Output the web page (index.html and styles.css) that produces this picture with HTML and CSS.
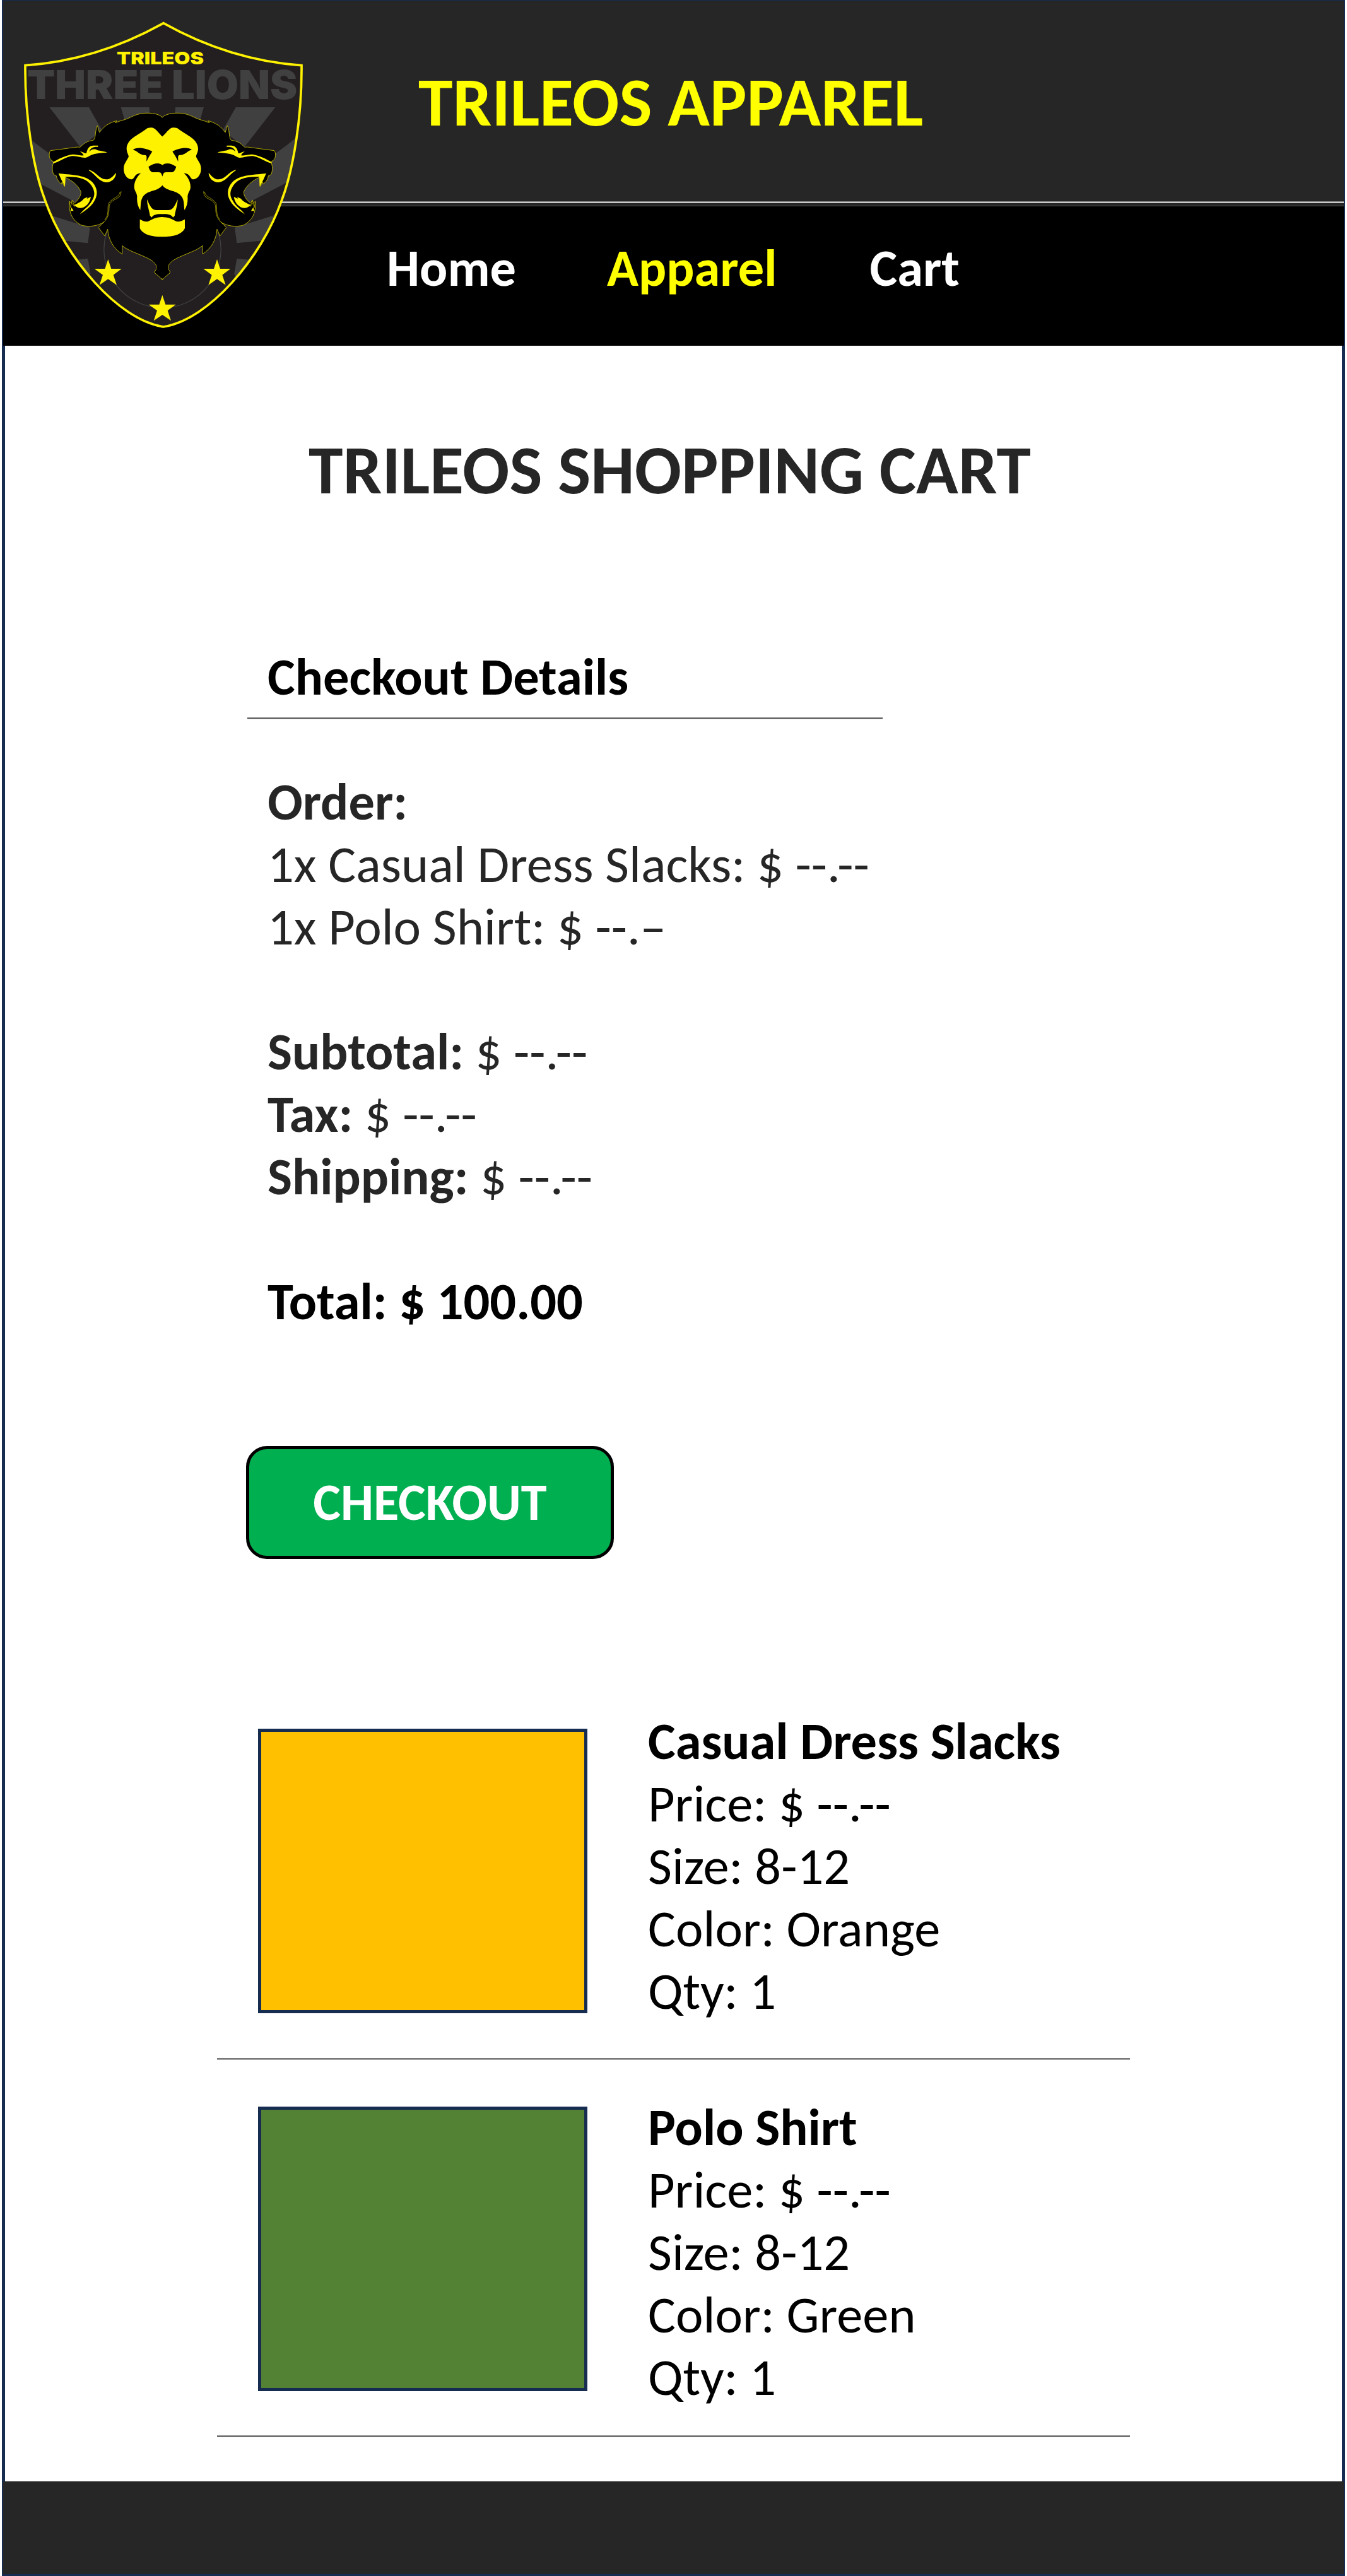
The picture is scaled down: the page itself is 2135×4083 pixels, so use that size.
FILE: index.html
```html
<!DOCTYPE html>
<html lang="en">
<head>
<meta charset="utf-8">
<title>Trileos Apparel</title>
<link rel="stylesheet" href="styles.css">
</head>
<body>
<div class="page">
  <header class="header">
    <svg class="logo" viewBox="0 0 1560 1680" role="img" aria-label="Trileos Three Lions">
      <defs>
        <clipPath id="shield-clip"><path d="M777,110 Q1093,287 1434,311 C1436,560 1394,810 1339,954 C1244,1225 994,1520 777,1554 C560,1520 310,1225 215,954 C160,810 118,560 120,311 Q461,287 777,110Z"/></clipPath>
        <g id="rays">
          <path d="M55,60H243L305,170L202,250Z"/>
          <path d="M395,60H530L534,130H415Z"/>
          <path d="M-50,200L0,240L60,284L300,420L180,512L20,428L-40,400Z"/>
          <path d="M60,574L248,632L238,706L110,694Z"/>
          <path d="M150,788L238,780L250,850L240,880Z"/>
        </g>
        <path id="mane" d="M593,108C572,90 542,87 510,88C482,89 460,98 440,108C415,121 394,122 368,134L376,124C340,132 312,152 293,180L283,147C270,178 277,206 264,217C235,220 218,232 200,251C190,246 175,252 60,266C52,276 51,300 64,312L76,321C68,335 66,360 75,380L88,386C90,402 98,414 112,425L115,415L127,437L130,393C165,410 190,430 205,462C206,482 190,502 175,516L163,502L160,515L150,508C145,560 165,600 205,620C240,632 290,625 316,604L288,632L318,672L332,640C335,690 362,735 401,758V718C430,745 500,762 540,788C572,812 562,820 562,832L556,840V848L575,864L593,881Z"/>
        <g id="side-lion">
          <path d="M72,322C110,297 145,286 168,284C190,286 200,290 218,289C215,281 207,275 200,269C215,272 224,281 231,279C235,255 245,244 262,242H286V248C262,247 248,254 245,272C250,262 262,257 275,260C290,269 310,266 330,275C300,277 275,278 252,288C242,293 235,300 222,300C203,300 185,291 165,292C140,293 110,315 74,327Z"/>
          <path d="M243,357C278,368 292,401 324,403C345,404 360,385 372,371C372,395 352,417 326,417C290,415 275,380 243,361Z"/>
          <path d="M98,374C150,382 222,378 258,415C286,445 286,478 268,507C252,536 222,552 200,569C214,549 245,530 257,505C274,480 271,457 255,433C232,398 190,388 131,391L129,437L112,405Z"/>
          <path d="M172,525C190,516 208,510 218,495L236,487L233,495L252,486C248,510 235,530 212,538C197,542 184,536 172,525Z"/>
          <path d="M155,553L160,536L170,553Z"/>
        </g>
        <g id="side-lines">
          <path d="M64,312L76,321"/>
          <path d="M396,460C396,498 362,492 345,515C331,533 350,568 316,604"/>
          <path d="M391,462C388,488 358,488 339,513C326,533 344,565 318,596"/>
          <path d="M150,508L155,538L160,515L175,532L163,502"/>
        </g>
        <path id="half-face" d="M593,200C577,188 560,158 542,157C520,155 515,165 500,174C465,198 424,215 422,256C422,275 430,282 432,295C420,320 408,328 408,354C408,382 428,403 445,403C462,400 458,374 490,374C475,385 458,410 458,440C460,460 471,465 472,485C470,510 475,530 487,549C490,530 487,510 497,490C520,450 568,465 593,430Z"/>
        <g id="face-dark">
          <path d="M452,262C472,246 520,256 544,271C535,285 525,300 517,318C515,302 522,290 510,287C485,290 475,268 452,262Z"/>
          <path d="M593,336C580,324 555,322 526,343C530,355 535,368 545,369C560,370 582,366 586,374L593,389Z"/>
        </g>
        <g id="half-jaw">
          <path d="M519,498C530,520 538,548 562,549H593V568C570,566 548,570 541,584L533,575C530,550 520,530 519,498Z"/>
          <path d="M485,593C497,598 505,604 517,604C537,603 545,583 593,582V676C550,676 500,668 485,635Z"/>
        </g>
        <path id="star" d="M334,783L349,828H398L359,857L375,905L334,877L293,905L309,857L269,828H319Z"/>
      </defs>
      <path class="shield" d="M777,110 Q1093,287 1434,311 C1436,560 1394,810 1339,954 C1244,1225 994,1520 777,1554 C560,1520 310,1225 215,954 C160,810 118,560 120,311 Q461,287 777,110Z"/>
      <text class="logo-motto" x="128" y="472" textLength="1286" lengthAdjust="spacingAndGlyphs">THREE LIONS</text>
      <text class="logo-name" x="555" y="306" textLength="414" lengthAdjust="spacingAndGlyphs">TRILEOS</text>
      <g clip-path="url(#shield-clip)">
        <g transform="translate(180 450)">
          <g class="ray"><use href="#rays"/><use href="#rays" transform="translate(1184 0) scale(-1 1)"/></g>
          <path class="ring" d="M325,660A278,278 0 1 0 860,660"/>
        </g>
      </g>
      <path class="shield-edge" d="M777,110 Q1093,287 1434,311 C1436,560 1394,810 1339,954 C1244,1225 994,1520 777,1554 C560,1520 310,1225 215,954 C160,810 118,560 120,311 Q461,287 777,110Z"/>
      <g transform="translate(180 450)">
        <g class="mane"><use href="#mane"/><use href="#mane" transform="translate(1184 0) scale(-1 1)"/></g>
        <path class="dark" d="M588,110H596V870L592,875L588,870Z"/>
        <g class="bright"><use href="#side-lion"/><use href="#side-lion" transform="translate(1184 0) scale(-1 1)"/></g>
        <g class="lines"><use href="#side-lines"/><use href="#side-lines" transform="translate(1184 0) scale(-1 1)"/></g>
        <g class="bright"><use href="#half-face"/><use href="#half-face" transform="translate(1184 0) scale(-1 1)"/></g>
        <g class="dark"><use href="#face-dark"/><use href="#face-dark" transform="translate(1184 0) scale(-1 1)"/></g>
        <g class="bright"><use href="#half-jaw"/><use href="#half-jaw" transform="translate(1184 0) scale(-1 1)"/></g>
        <g class="bright"><use href="#star"/><use href="#star" x="518"/><use href="#star" x="258" y="170"/></g>
      </g>
    </svg>
    <div class="brand">TRILEOS APPAREL</div>
    <nav class="nav">
      <a class="nav-link">Home</a>
      <a class="nav-link active">Apparel</a>
      <a class="nav-link">Cart</a>
    </nav>
  </header>
  <main class="main">
    <h1 class="title">TRILEOS SHOPPING CART</h1>
    <section class="summary">
      <h2 class="summary-title">Checkout Details</h2>
      <div class="lines-group">
        <p><b>Order:</b></p>
        <p>1x Casual Dress Slacks: $ --.--</p>
        <p>1x Polo Shirt: $ --.–</p>
      </div>
      <div class="lines-group">
        <p><b>Subtotal:</b> $ --.--</p>
        <p><b>Tax:</b> $ --.--</p>
        <p><b>Shipping:</b> $ --.--</p>
      </div>
      <p class="total">Total: $ 100.00</p>
    </section>
    <button class="checkout">CHECKOUT</button>
    <section class="items">
      <article class="item">
        <div class="swatch orange"></div>
        <div class="info">
          <h3>Casual Dress Slacks</h3>
          <p>Price: $ --.--</p>
          <p>Size: 8-12</p>
          <p>Color: Orange</p>
          <p>Qty: 1</p>
        </div>
      </article>
      <article class="item second">
        <div class="swatch green"></div>
        <div class="info">
          <h3>Polo Shirt</h3>
          <p>Price: $ --.--</p>
          <p>Size: 8-12</p>
          <p>Color: Green</p>
          <p>Qty: 1</p>
        </div>
      </article>
    </section>
  </main>
  <footer class="footer"></footer>
</div>
</body>
</html>
```
FILE: styles.css
```css
* { box-sizing: border-box; margin: 0; padding: 0; }

body {
  background: #fff;
  color: #000;
  font-family: Calibri, Carlito, Lato, sans-serif;
  font-size: 82.5px;
  line-height: 99px;
}

.page {
  display: flex;
  flex-direction: column;
  height: 4083px;
  margin: 0 3px;
  border: 5px solid #172c51;
  border-top-width: 1px;
  border-bottom-width: 3px;
}

.header {
  position: relative;
  height: 547px;
  margin: 0 -3px;
  background: #262626;
}

.logo {
  position: absolute;
  top: -1px;
  left: -5px;
  width: 520px;
  height: 560px;
}

.shield { fill: #231f20; }
.shield-edge { fill: none; stroke: #fff200; stroke-width: 11; stroke-linejoin: miter; }
.ray { fill: #404040; }
.ring { fill: none; stroke: #404040; stroke-width: 4; }
.mane { fill: #000; stroke: #b3aa00; stroke-width: 3; }
.dark { fill: #000; }
.bright { fill: #fff200; }
.lines { fill: none; stroke: #b3aa00; stroke-width: 2.5; }
.logo-motto, .logo-name { font-family: Inter, Lato, sans-serif; font-weight: 900; }
.logo-motto { fill: #404040; font-size: 191px; }
.logo-name { fill: #fff200; font-size: 81px; }

.brand {
  height: 318px;
  padding: 95px 0 0 658px;
  color: #ff0;
  font-size: 110px;
  font-weight: 700;
  line-height: 132px;
}

.nav {
  display: flex;
  gap: 144px;
  height: 229px;
  padding: 56px 0 0 608px;
  background: linear-gradient(#8c8c8c 1px, #fff 1px 2px, #8c8c8c 2px 3px, #262626 3px 7px, #5a5a5a 7px 8px, #000 8px);
}

.nav-link { color: #fff; font-weight: 700; }
.nav-link.active { margin-right: 3px; color: #ff0; }

.main { flex: 1; }

.title {
  padding: 131px 0 0 481px;
  color: #262626;
  font-size: 110px;
  line-height: 132px;
}

.summary {
  width: 1007px;
  margin: 212px 0 0 384px;
  color: #262626;
}

.summary > * { padding-left: 32px; }

.summary-title {
  padding-bottom: 18px;
  background: linear-gradient(#8a8a8a 1px, #404040 1px 2px, #b5b5b5 2px) bottom / 100% 3px no-repeat;
  color: #000;
  font-size: 82.5px;
}

.lines-group { margin-top: 99px; }
.summary-title + .lines-group { margin-top: 81px; }

.total { margin-top: 99px; color: #000; font-weight: 700; }

.checkout {
  display: block;
  width: 583px;
  height: 179px;
  margin: 180px 0 0 382px;
  padding-bottom: 2px;
  border: 5px solid #000;
  border-radius: 33px;
  background: #00b050;
  color: #fff;
  font: 700 82.5px/99px Calibri, Carlito, Lato, sans-serif;
}

.items { width: 1447px; margin: 239px 0 0 336px; }

.item {
  display: flex;
  align-items: flex-start;
  gap: 96px;
  height: 555px;
  padding-left: 65px;
  background: linear-gradient(#8a8a8a 1px, #404040 1px 2px, #b5b5b5 2px) bottom / 100% 3px no-repeat;
}

.item.second { height: 541px; margin-top: 57px; }

.swatch { width: 522px; height: 451px; margin-top: 30px; border: 5px solid #172c51; }
.item.second .swatch { margin-top: 17px; }
.orange { background: #ffc000; }
.green { background: #548235; }

.info h3 { font-size: inherit; }

.footer { height: 147px; margin: 0 -3px; background: #262626; }
```
